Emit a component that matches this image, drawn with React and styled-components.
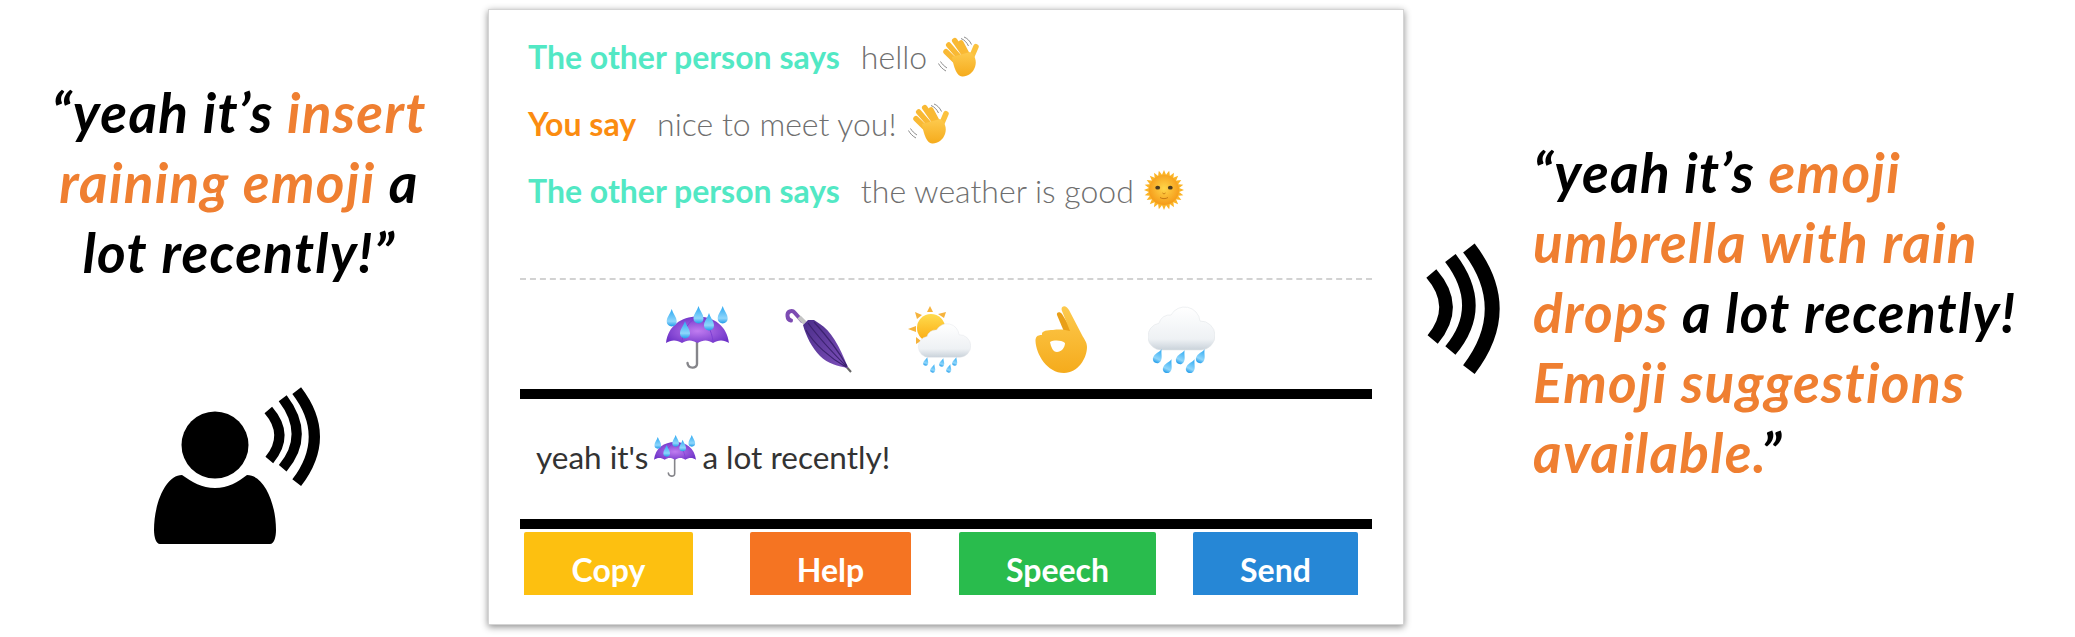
import React from 'react';
import styled, { createGlobalStyle } from 'styled-components';

const GlobalStyle = createGlobalStyle`
    html, body {
        margin: 0;
        padding: 0;
        background: #fff;
    }
`

const Page = styled.div`
    display: flex;
    width: 2075px;
    height: 637px;
    overflow: hidden;
    background: #fff;
    font-family: Lato, "Liberation Sans", sans-serif;
`

const LeftColumn = styled.div`
    width: 488px;
    flex-shrink: 0;
    box-sizing: border-box;
    padding: 77px 10px 0 0;
    display: flex;
    flex-direction: column;
`

const RightColumn = styled.div`
    flex: 1;
    display: flex;
    align-items: flex-start;
    padding: 137px 0 0 19px;
    gap: 32px;
`

const Quote = styled.p`
    margin: 0;
    font-size: 55px;
    line-height: 70px;
    letter-spacing: 1.3px;
    font-weight: 700;
    font-style: italic;
    color: #000;
    text-align: ${props => props.$align || 'left'};
    white-space: nowrap;
`

const Hot = styled.span`
    color: #ef7f31;
`

const SpeakerIcon = styled.svg`
    display: block;
    margin: 98px 0 0 154px;
`

const WavesIcon = styled.svg`
    display: block;
    margin-top: 106px;
    flex-shrink: 0;
`

const Card = styled.div`
    width: 916px;
    height: 616px;
    margin-top: 9px;
    flex-shrink: 0;
    box-sizing: border-box;
    padding: 0 31px;
    background: #fff;
    border: 1px solid #d4d4d4;
    box-shadow: 0 2px 7px rgba(0, 0, 0, 0.45);
    display: flex;
    flex-direction: column;
`

const Messages = styled.div`
    height: 270px;
    box-sizing: border-box;
    padding: 25px 0 0 8px;
    border-bottom: 2px dashed #d2d2d2;
    display: flex;
    flex-direction: column;
    gap: 25px;
`

const Message = styled.div`
    display: flex;
    align-items: center;
    height: 42px;
    font-size: 32px;
`

const Speaker = styled.span`
    font-weight: 700;
    color: ${props => props.$color};
    margin-right: 21px;
`

const Said = styled.span`
    font-weight: 300;
    color: #6f6f6f;
    margin-right: 10px;
`

const Suggestions = styled.div`
    height: 109px;
    box-sizing: border-box;
    padding: 26px 0 0 117px;
    display: flex;
    align-items: flex-start;
`

const Suggestion = styled.div`
    width: 121px;
    display: flex;
    justify-content: center;
`

const Composer = styled.div`
    height: 116px;
    padding: 0 0 4px 16px;
    border-top: 10px solid #000;
    border-bottom: 10px solid #000;
    display: flex;
    align-items: center;
    font-size: 31.5px;
    font-weight: 400;
    color: #333;
    gap: 6px;
`

const Buttons = styled.div`
    display: flex;
    margin: 3px 0 0 4px;
`

const Button = styled.div`
    width: ${props => props.$width}px;
    height: 63px;
    margin-right: ${props => props.$gap || 0}px;
    box-sizing: border-box;
    padding-top: 17px;
    border-radius: 2px 2px 0 0;
    background: ${props => props.$color};
    color: #fff;
    font-size: 32px;
    font-weight: 700;
    line-height: 42px;
    text-align: center;
`

const Defs = styled.svg`
    position: absolute;
    width: 0;
    height: 0;
`

const SharedDefs = () => (
    <Defs aria-hidden="true">
        <defs>
            <radialGradient id="canopy" cx="50%" cy="55%" r="60%">
                <stop offset="0%" stopColor="#c07cf0" />
                <stop offset="100%" stopColor="#6a2fc6" />
            </radialGradient>
            <linearGradient id="furled" x1="0" y1="0" x2="1" y2="1">
                <stop offset="0%" stopColor="#4b2e8a" />
                <stop offset="100%" stopColor="#7d4fba" />
            </linearGradient>
            <linearGradient id="drop" x1="0" y1="0" x2="0" y2="1">
                <stop offset="0%" stopColor="#2aa8f2" />
                <stop offset="70%" stopColor="#8fd6fb" />
                <stop offset="100%" stopColor="#1f9bea" />
            </linearGradient>
            <linearGradient id="cloud" x1="0" y1="0" x2="0" y2="1">
                <stop offset="0%" stopColor="#ffffff" />
                <stop offset="75%" stopColor="#eef1f4" />
                <stop offset="100%" stopColor="#c9d2da" />
            </linearGradient>
            <linearGradient id="hand" x1="0" y1="0" x2="0" y2="1">
                <stop offset="0%" stopColor="#fdca4e" />
                <stop offset="100%" stopColor="#f5ab1c" />
            </linearGradient>
            <radialGradient id="sun" cx="50%" cy="45%" r="55%">
                <stop offset="0%" stopColor="#ffd64a" />
                <stop offset="100%" stopColor="#f59a18" />
            </radialGradient>
            <linearGradient id="sunBack" x1="0" y1="0" x2="0" y2="1">
                <stop offset="0%" stopColor="#ffdc4e" />
                <stop offset="100%" stopColor="#fba90f" />
            </linearGradient>
        </defs>
    </Defs>
)

const Drop = ({ x, y, s = 1, rot = 0 }) => (
    <path
        transform={`translate(${x} ${y}) rotate(${rot}) scale(${s})`}
        d="M0 -10C1.5 -5 5 -2 5 2.5A5 5 0 0 1 -5 2.5C-5 -2 -1.5 -5 0 -10Z"
        fill="url(#drop)"
    />
)

const WAVES = [
    { d: 'M142.7 5.7Q178 51.7 142.7 97.7', w: 11 },
    { d: 'M128.7 13.3Q156.7 50 128.7 83.3', w: 10 },
    { d: 'M114.3 25Q136 50 115.3 75', w: 10 },
]

// same three arcs beside the person and on their own next to the right quote
const Waves = () => (
    <g fill="none" stroke="#000">
        {WAVES.map(wave => <path key={wave.d} d={wave.d} strokeWidth={wave.w} />)}
    </g>
)

const PersonIcon = () => (
    <SpeakerIcon width="170" height="162" viewBox="0 0 170 162">
        <circle cx="61" cy="60" r="33.5" fill="#000" />
        <path
            d="M28 90C38 97 48 103 61 103C74 103 84 97 93 90C110 90 122 118 122 145C122 152 120 159 116 159H6C2 159 0 152 0 145C0 118 12 90 28 90Z"
            fill="#000"
        />
        <Waves />
    </SpeakerIcon>
)

const SoundIcon = () => (
    <WavesIcon width="78" height="131" viewBox="108 2 59 99">
        <Waves />
    </WavesIcon>
)

const CLOUD = 'M13 44A13.5 13.5 0 0 1 11 17.200A11 11 0 0 1 23 9A15.500 15.500 0 0 1 52 15A14.500 14.500 0 0 1 53 44Z';

const RainUmbrella = ({ size = 66 }) => (
    <svg width={size * 63 / 66} height={size} viewBox="0 0 63 66">
        <path d="M31 36V58C31 63 22 63 21.5 57" fill="none" stroke="#85858a" strokeWidth="2.4" strokeLinecap="round" />
        <path
            d="M0 37C2 20 15 10.5 31.5 10.5C48 10.5 61 20 63 37C58 33.5 52 33.5 47 37C42 33.5 37 33.5 31.5 37C26 33.5 21 33.5 16 37C11 33.5 5 33.5 0 37Z"
            fill="url(#canopy)"
        />
        <path d="M16 36C17 24 23 15 31 11M47 36C46 24 40 15 32 11" fill="none" stroke="#7d3ed4" strokeWidth="1" />
        <Drop x={5.7} y={13} />
        <Drop x={32.5} y={10} />
        <Drop x={56.7} y={10} />
        <Drop x={43} y={17} />
        <Drop x={19} y={25} />
    </svg>
)

const ClosedUmbrella = () => (
    <svg width="69" height="67" viewBox="0 0 69 67">
        <path d="M18 15L10.500 6.500C8 3.500 3 5.500 3.500 10C3.700 12.500 5 14 7 14.500" fill="none" stroke="#7c4bb2" strokeWidth="4" strokeLinecap="round" />
        <path d="M15 11L21 17" stroke="#c4c4c4" strokeWidth="4.500" />
        <path d="M60 58L67 66" stroke="#666" strokeWidth="2" />
        <path d="M19 19L24 14L30 14L36 18C46 24 56 40 64 62C54 60 44 58 36 50C28 42 22 30 19 19Z" fill="url(#furled)" />
        <path d="M24 17C32 28 48 46 63 61M30 16C40 27 54 44 63 60M22 24C30 38 46 52 62 61" fill="none" stroke="#3c2270" strokeWidth="1.200" />
    </svg>
)

const SunCloud = () => (
    <svg width="63" height="67" viewBox="0 0 63 67">
        {[[22, 0, 19, 6, 25, 6], [7, 6, 9, 13, 14, 9], [38, 6, 36, 12, 30, 8], [0, 23, 8, 20, 8, 26], [8, 38, 8, 31, 13, 35]].map(ray => (
            <polygon key={ray.join()} points={ray.join(' ')} fill="#f6b33c" />
        ))}
        <circle cx="23" cy="22" r="14" fill="url(#sunBack)" />
        <path transform="translate(10.500 17) scale(0.780)" d={CLOUD} fill="url(#cloud)" stroke="#e2e6ea" strokeWidth="0.600" />
        <Drop x={18} y={56} s={0.5} rot={15} />
        <Drop x={34} y={57} s={0.5} rot={15} />
        <Drop x={47} y={56} s={0.5} rot={15} />
        <Drop x={25} y={63} s={0.5} rot={15} />
        <Drop x={41} y={63} s={0.5} rot={15} />
    </svg>
)

const OkHand = () => (
    <svg width="52" height="67" viewBox="0 0 52 67">
        <path d="M22 9C21 6 25 5 27 8L38 26L30 28Z" fill="#e99f18" />
        <path
            fillRule="evenodd"
            d="M0.500 35C1 48 12 67 29 67C43 67 52 52 52 41C52 36 49 33 47 29L34 4C31 -2 25 -0.500 27 5L35 25C30 24 26 23 18 24C12 24 6 25 7 29C2 29 0.500 31 0.500 35ZM15 36C19 34 26 34 30 37C30 42 26 46 22 46C18 46 16 41 15 36Z"
            fill="url(#hand)"
        />
    </svg>
)

const RainCloud = () => (
    <svg width="67" height="67" viewBox="0 0 67 67">
        <path d={CLOUD} fill="url(#cloud)" stroke="#e2e6ea" strokeWidth="0.600" />
        <Drop x={10} y={51} s={0.85} rot={25} />
        <Drop x={33} y={52} s={0.85} rot={25} />
        <Drop x={53} y={51} s={0.85} rot={25} />
        <Drop x={20} y={61} s={0.85} rot={25} />
        <Drop x={43} y={61} s={0.85} rot={25} />
    </svg>
)

const WaveHand = () => (
    <svg width="43" height="42" viewBox="0 0 43 42">
        <path d="M24 3.500C27 4.500 30 7.500 31.500 11M27 2C30 3 33 6 34.500 9.500M1.500 28.500C3 31.500 6 34.500 9 36M3.500 26.500C5 29 7 31 10 33" fill="none" stroke="#8d8d8d" strokeWidth="1" />
        <g stroke="#f9b934" strokeLinecap="round" strokeWidth="5.500" fill="none">
            <path d="M9 16.700L23.300 30.700" />
            <path d="M11.700 10L26.700 27.300" />
            <path d="M17.700 5.700L30 23.300" />
            <path d="M24 8L32 23" />
            <path d="M39 11.700L33.300 25" stroke="#fbc23e" />
        </g>
        <path d="M15 22L33 17C38 20 40 26 38 32C36 38 30 42 25 41.500C20 41 17 34 15 22Z" fill="url(#hand)" />
    </svg>
)

const RAYS = Array.from({ length: 24 }, (_, i) => i * 15);

const SunFace = () => (
    <svg width="40" height="40" viewBox="0 0 40 40">
        {RAYS.map(angle => (
            <polygon key={angle} points="17.500,6 22.500,6 20,0" fill="#fbb426" transform={`rotate(${angle} 20 20)`} />
        ))}
        <circle cx="20" cy="20" r="15" fill="url(#sun)" />
        <ellipse cx="13.700" cy="17.700" rx="2.400" ry="1.900" fill="#4a3a20" />
        <ellipse cx="26.300" cy="17.700" rx="2.400" ry="1.900" fill="#4a3a20" />
        <path d="M18.500 23C19.500 24 20.500 24 21.500 23M16 27.500C18 29 22 29 24 27.500" fill="none" stroke="#c77a14" strokeWidth="1" />
    </svg>
)

const App = () => {
    return (
        <Page>
            <GlobalStyle />
            <SharedDefs />
            <LeftColumn>
                <Quote $align="center">
                    “yeah it’s <Hot>insert</Hot><br />
                    <Hot>raining emoji</Hot> a<br />
                    lot recently!”
                </Quote>
                <PersonIcon />
            </LeftColumn>
            <Card>
                <Messages>
                    <Message>
                        <Speaker $color="#52e8c4">The other person says</Speaker>
                        <Said>hello</Said>
                        <WaveHand />
                    </Message>
                    <Message>
                        <Speaker $color="#fb8c10">You say</Speaker>
                        <Said>nice to meet you!</Said>
                        <WaveHand />
                    </Message>
                    <Message>
                        <Speaker $color="#52e8c4">The other person says</Speaker>
                        <Said>the weather is good</Said>
                        <SunFace />
                    </Message>
                </Messages>
                <Suggestions>
                    <Suggestion><RainUmbrella /></Suggestion>
                    <Suggestion><ClosedUmbrella /></Suggestion>
                    <Suggestion><SunCloud /></Suggestion>
                    <Suggestion><OkHand /></Suggestion>
                    <Suggestion><RainCloud /></Suggestion>
                </Suggestions>
                <Composer>
                    <span>yeah it's</span>
                    <RainUmbrella size={44} />
                    <span>a lot recently!</span>
                </Composer>
                <Buttons>
                    <Button $width={169} $gap={57} $color="#fdc010">Copy</Button>
                    <Button $width={161} $gap={48} $color="#f57422">Help</Button>
                    <Button $width={197} $gap={37} $color="#29bc4d">Speech</Button>
                    <Button $width={165} $color="#2687d6">Send</Button>
                </Buttons>
            </Card>
            <RightColumn>
                <SoundIcon />
                <Quote>
                    “yeah it’s <Hot>emoji</Hot><br />
                    <Hot>umbrella with rain</Hot><br />
                    <Hot>drops</Hot> a lot recently!<br />
                    <Hot>Emoji suggestions</Hot><br />
                    <Hot>available.</Hot>”
                </Quote>
            </RightColumn>
        </Page>
    )
}

export default App;
